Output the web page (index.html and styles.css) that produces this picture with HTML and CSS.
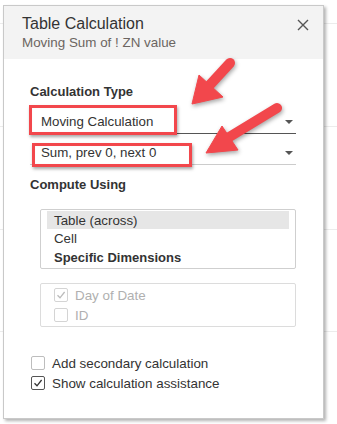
FILE: index.html
```html
<!DOCTYPE html>
<html lang="en">
<head>
    <meta charset="UTF-8">
    <meta name="viewport" content="width=device-width, initial-scale=1.0">
    <title>Table Calculation</title>
    <link rel="stylesheet" href="styles.css">
</head>
<body>
    <div class="dialog">
        <div class="header">
            <div class="title">Table Calculation</div>
            <div class="subtitle">Moving Sum of ! ZN value</div>
            <svg class="close" width="12" height="12" viewBox="0 0 12 12">
                <path d="M1 1 L11 11 M11 1 L1 11" stroke="#555" stroke-width="1.4" fill="none"/>
            </svg>
        </div>
        <div class="content">
            <div class="label">Calculation Type</div>
            <div class="select first">
                <span>Moving Calculation</span>
                <span class="caret"></span>
                <div class="mark mark-one"></div>
            </div>
            <div class="select second">
                <span>Sum, prev 0, next 0</span>
                <span class="caret"></span>
                <div class="mark mark-two"></div>
            </div>

            <div class="label compute">Compute Using</div>
            <div class="listbox">
                <div class="row selected">Table (across)</div>
                <div class="row">Cell</div>
                <div class="row bold">Specific Dimensions</div>
            </div>

            <div class="dims">
                <div class="check disabled">
                    <span class="box">
                        <svg width="10" height="10" viewBox="0 0 10 10"><path d="M1.5 5.2 L4 7.8 L8.6 2" stroke="#bbb" stroke-width="1.3" fill="none"/></svg>
                    </span>
                    Day of Date
                </div>
                <div class="check disabled">
                    <span class="box"></span>
                    ID
                </div>
            </div>

            <div class="options">
                <div class="check">
                    <span class="box light"></span>
                    Add secondary calculation
                </div>
                <div class="check">
                    <span class="box dark">
                        <svg width="10" height="10" viewBox="0 0 10 10"><path d="M1.5 5.2 L4 7.8 L8.6 2" stroke="#333" stroke-width="1.3" fill="none"/></svg>
                    </span>
                    Show calculation assistance
                </div>
            </div>
        </div>
    </div>

    <svg class="arrows" width="337" height="424" viewBox="0 0 337 424">
        <g fill="#f2474c" stroke="#f2474c">
            <line x1="230" y1="63" x2="207" y2="88" stroke-width="10" stroke-linecap="round"/>
            <polygon points="192,104 199,75 223,97" stroke-width="1" stroke-linejoin="round"/>
            <line x1="277" y1="108" x2="226" y2="139" stroke-width="10" stroke-linecap="round"/>
            <polygon points="206,153 222,126 238,150" stroke-width="1" stroke-linejoin="round"/>
        </g>
    </svg>
</body>
</html>
```

FILE: styles.css
```css
body {
    margin: 0;
    height: 424px;
    background: #fff;
    background-image:
        linear-gradient(#ececec, #ececec),
        linear-gradient(#ececec, #ececec),
        linear-gradient(#ececec, #ececec),
        linear-gradient(#ececec, #ececec);
    background-size: 100% 1px;
    background-repeat: no-repeat;
    background-position: 0 23px, 0 126px, 0 229px, 0 331px;
    font-family: "Liberation Sans", Arial, sans-serif;
    color: #333;
    overflow: hidden;
}
.dialog {
    position: relative;
    margin: 5px 0 0 3px;
    width: 319px;
    height: 412px;
    background: #fff;
    border: 1px solid #c9c9c9;
    box-shadow: 2px 2px 3px rgba(0, 0, 0, 0.3);
}
.header {
    position: relative;
    height: 53px;
    padding: 8px 0 0 18px;
    box-sizing: border-box;
    background: #f3f3f3;
}
.title {
    font-size: 16px;
    line-height: 20px;
    color: #333;
}
.subtitle {
    font-size: 13.4px;
    line-height: 18px;
    color: #6b6561;
}
.close {
    position: absolute;
    right: 14px;
    top: 13px;
}
.content {
    padding: 24px 0 0 26px;
}
.label {
    font-size: 13px;
    font-weight: bold;
    line-height: 18px;
    color: #333;
}
.select {
    position: relative;
    width: 266px;
    height: 23px;
    line-height: 23px;
    padding-left: 11px;
    box-sizing: content-box;
    font-size: 13.3px;
    color: #333;
    border-bottom: 1px solid #555;
    margin-top: 9px;
    width: 255px;
}
.select.second {
    margin-top: 7px;
    border-bottom-color: #ccc;
}
.caret {
    position: absolute;
    right: 3px;
    top: 10px;
    border-left: 4px solid transparent;
    border-right: 4px solid transparent;
    border-top: 4px solid #555;
}
.mark {
    position: absolute;
    border: 3px solid #f2474c;
    box-shadow: 1px 2px 3px rgba(0, 0, 0, 0.35), inset 0 0 1px rgba(0, 0, 0, 0.1);
    box-sizing: border-box;
}
.mark-one {
    left: -1px;
    top: -5px;
    width: 148px;
    height: 30px;
}
.mark-two {
    left: 2px;
    top: 2px;
    width: 160px;
    height: 24px;
}
.compute {
    margin-top: 11px;
}
.listbox {
    margin: 15px 0 0 10px;
    width: 254px;
    padding: 1px 6px 1px 6px;
    box-sizing: content-box;
    width: 242px;
    border: 1px solid #cfcfcf;
    border-radius: 2px;
}
.row {
    height: 19px;
    line-height: 19px;
    padding-left: 7px;
    font-size: 13.3px;
    color: #333;
}
.row.selected {
    background: #e6e6e6;
    height: 18px;
}
.row.bold {
    font-weight: bold;
    font-size: 13px;
}
.dims {
    margin: 14px 0 0 10px;
    width: 254px;
    padding: 1px 13px 1px 13px;
    width: 228px;
    border: 1px solid #dcdcdc;
    border-radius: 2px;
}
.check {
    display: flex;
    align-items: center;
    gap: 7px;
    height: 20px;
    font-size: 13.4px;
    color: #333;
}
.check .box {
    display: flex;
    align-items: center;
    justify-content: center;
    width: 12px;
    height: 12px;
    border: 1px solid #d4d4d4;
    border-radius: 2px;
    background: #fff;
}
.check.disabled {
    color: #b0b0b0;
}
.check .box.light {
    border-color: #bdbdbd;
}
.check .box.dark {
    border-color: #555;
}
.options {
    margin-top: 26px;
    padding-left: 1px;
}
.arrows {
    position: absolute;
    left: 0;
    top: 0;
    pointer-events: none;
    filter: drop-shadow(1px 2px 2px rgba(0, 0, 0, 0.35));
}
```
